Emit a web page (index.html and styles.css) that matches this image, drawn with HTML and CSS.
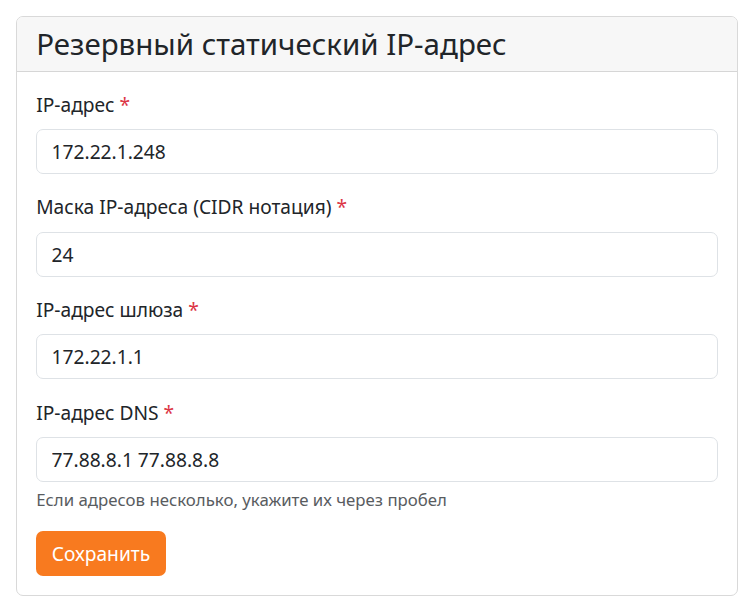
FILE: index.html
```html
<!DOCTYPE html>
<html lang="ru">
<head>
<meta charset="utf-8">
<title>Резервный статический IP-адрес</title>
<link rel="stylesheet" href="styles.css">
</head>
<body>
<div class="card">
  <div class="card-header">
    <h3 class="card-title">Резервный статический IP-адрес</h3>
  </div>
  <form class="card-body">
    <div class="group">
      <label class="label">IP-адрес <span class="req">*</span></label>
      <input class="input" type="text" value="172.22.1.248">
    </div>
    <div class="group">
      <label class="label">Маска IP-адреса (CIDR нотация) <span class="req">*</span></label>
      <input class="input" type="text" value="24">
    </div>
    <div class="group">
      <label class="label">IP-адрес шлюза <span class="req">*</span></label>
      <input class="input" type="text" value="172.22.1.1">
    </div>
    <div class="group">
      <label class="label">IP-адрес DNS <span class="req">*</span></label>
      <input class="input" type="text" value="77.88.8.1 77.88.8.8">
      <div class="help">Если адресов несколько, укажите их через пробел</div>
    </div>
    <button class="btn" type="button">Сохранить</button>
  </form>
</div>
</body>
</html>
```
FILE: styles.css
```css
html {
  font-size: 19.2px;
}
html, body {
  margin: 0;
  background: #ffffff;
}
body {
  padding: 16px 12px 14px 16px;
  font-family: "Noto Sans", "Open Sans", sans-serif;
  color: #212529;
}
.card {
  border: 1px solid #d9d9d9;
  border-radius: 7px;
  background: #fff;
  overflow: hidden;
}
.card-header {
  background: #f7f7f7;
  border-bottom: 1px solid #d6d6d6;
  padding: 0.5rem 1rem;
}
.card-title {
  margin: 0;
  font-size: 29.5px;
  line-height: 34.4px;
  font-weight: 400;
  color: #212529;
}
.card-body {
  display: flex;
  flex-direction: column;
  align-items: flex-start;
  padding: 1rem;
  margin: 0;
}
.group {
  align-self: stretch;
  display: flex;
  flex-direction: column;
  margin-bottom: 1rem;
}
.label {
  font-size: 1rem;
  line-height: 1.5;
  margin-bottom: 0.5rem;
  color: #212529;
}
.req {
  color: #dc3545;
}
.input {
  box-sizing: border-box;
  height: 45px;
  border: 1px solid #dee2e6;
  border-radius: 7px;
  padding: 0 0.75rem;
  font-family: inherit;
  font-size: 1rem;
  color: #212529;
  background: #fff;
  outline: none;
  width: 100%;
}
.help {
  margin-top: 0.25rem;
  font-size: 0.875rem;
  line-height: 1.5;
  color: #595c5f;
}
.btn {
  box-sizing: border-box;
  height: 45px;
  padding: 0 15.5px;
  border: 0;
  border-radius: 7px;
  background: #f87a1f;
  color: #fff;
  font-family: inherit;
  font-size: 1rem;
  cursor: pointer;
}
```
